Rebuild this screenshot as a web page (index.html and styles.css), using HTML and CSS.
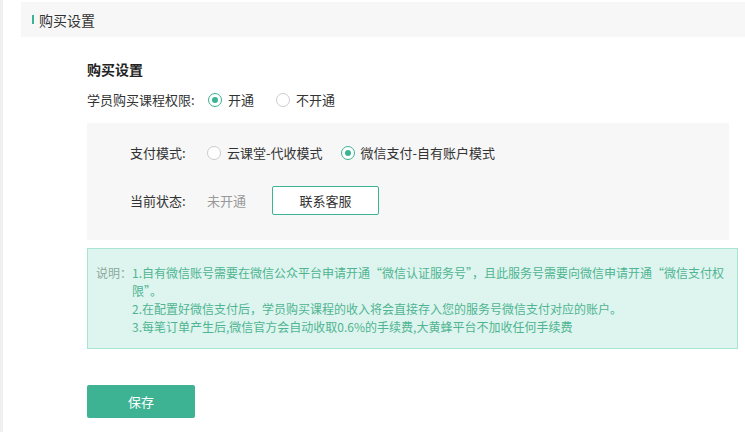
FILE: index.html
```html
<!DOCTYPE html>
<html lang="zh-CN">
<head>
    <meta charset="UTF-8">
    <meta name="viewport" content="width=device-width, initial-scale=1.0">
    <title>购买设置</title>
    <link rel="stylesheet" href="styles.css">
</head>
<body>
    <div class="page">
        <div class="panel-header">
            <span class="header-bar"></span>
            <span class="header-title">购买设置</span>
        </div>

        <div class="content">
            <h2 class="section-title">购买设置</h2>

            <div class="form-row permission-row">
                <span class="row-label">学员购买课程权限:</span>
                <label class="radio checked"><span class="radio-dot"></span>开通</label>
                <label class="radio"><span class="radio-dot"></span>不开通</label>
            </div>

            <div class="pay-box">
                <div class="form-row">
                    <span class="pay-label">支付模式:</span>
                    <label class="radio"><span class="radio-dot"></span>云课堂-代收模式</label>
                    <label class="radio checked"><span class="radio-dot"></span>微信支付-自有账户模式</label>
                </div>
                <div class="form-row status-row">
                    <span class="pay-label">当前状态:</span>
                    <span class="status-text">未开通</span>
                    <button class="contact-button">联系客服</button>
                </div>
            </div>

            <div class="note-box">
                <span class="note-label">说明：</span>
                <div class="note-lines">
                    <p>1.自有微信账号需要在微信公众平台申请开通“微信认证服务号”，且此服务号需要向微信申请开通“微信支付权限”。</p>
                    <p>2.在配置好微信支付后，学员购买课程的收入将会直接存入您的服务号微信支付对应的账户。</p>
                    <p>3.每笔订单产生后,微信官方会自动收取0.6%的手续费,大黄蜂平台不加收任何手续费</p>
                </div>
            </div>

            <button class="save-button">保存</button>
        </div>
    </div>
</body>
</html>
```

FILE: styles.css
```css
* {
    margin: 0;
    padding: 0;
    box-sizing: border-box;
}

body {
    font-family: "Noto Sans CJK SC", "Noto Sans", sans-serif;
    background: #fff;
    color: #333;
    font-size: 13px;
}

.page {
    min-height: 100vh;
    border-left: 3px solid #f0f0f0;
    padding: 2px 0 0 18px;
}

.panel-header {
    height: 35px;
    background: #f7f7f7;
    display: flex;
    align-items: center;
    padding-left: 11px;
    gap: 5px;
}

.header-bar {
    width: 2px;
    height: 9px;
    background: #3cb393;
}

.header-title {
    font-size: 14px;
    color: #333;
}

.content {
    padding-left: 66px;
}

.section-title {
    font-size: 14px;
    font-weight: bold;
    color: #222;
    line-height: 20px;
    margin-top: 22px;
}

.form-row {
    display: flex;
    align-items: center;
    height: 20px;
    line-height: 20px;
}

.permission-row {
    margin-top: 11px;
}

.row-label {
    width: 121px;
}

.radio {
    display: flex;
    align-items: center;
    gap: 6px;
    margin-right: 22px;
    color: #333;
    cursor: pointer;
}

.pay-box .radio {
    margin-right: 18px;
}

.radio-dot {
    width: 14px;
    height: 14px;
    border: 1px solid #ccc;
    border-radius: 50%;
    background: #fff;
    display: flex;
    align-items: center;
    justify-content: center;
}

.radio.checked .radio-dot {
    border-color: #3cb393;
}

.radio.checked .radio-dot::after {
    content: "";
    width: 6px;
    height: 6px;
    border-radius: 50%;
    background: #3cb393;
}

.pay-box {
    width: 642px;
    margin-top: 13px;
    background: #f7f7f7;
    padding: 20px 0 25px 43px;
}

.pay-label {
    width: 77px;
}

.status-row {
    margin-top: 23px;
    height: 29px;
}

.status-text {
    color: #999;
    width: 65px;
}

.contact-button {
    width: 107px;
    height: 29px;
    border: 1px solid #3cb393;
    background: #fff;
    border-radius: 2px;
    font-family: inherit;
    font-size: 13px;
    color: #333;
    cursor: pointer;
}

.note-box {
    width: 651px;
    margin-top: 8px;
    background: #def5ef;
    border: 1px solid #a8e6d4;
    padding: 15px 6px 12px 8px;
    display: flex;
    font-size: 12px;
    line-height: 18px;
}

.note-label {
    flex-shrink: 0;
    color: #8aa99d;
}

.note-lines {
    color: #4fb491;
}

.save-button {
    display: block;
    margin-top: 36px;
    width: 108px;
    height: 33px;
    border: none;
    border-radius: 2px;
    background: #3db393;
    color: #fff;
    font-family: inherit;
    font-size: 13px;
    cursor: pointer;
}
```
